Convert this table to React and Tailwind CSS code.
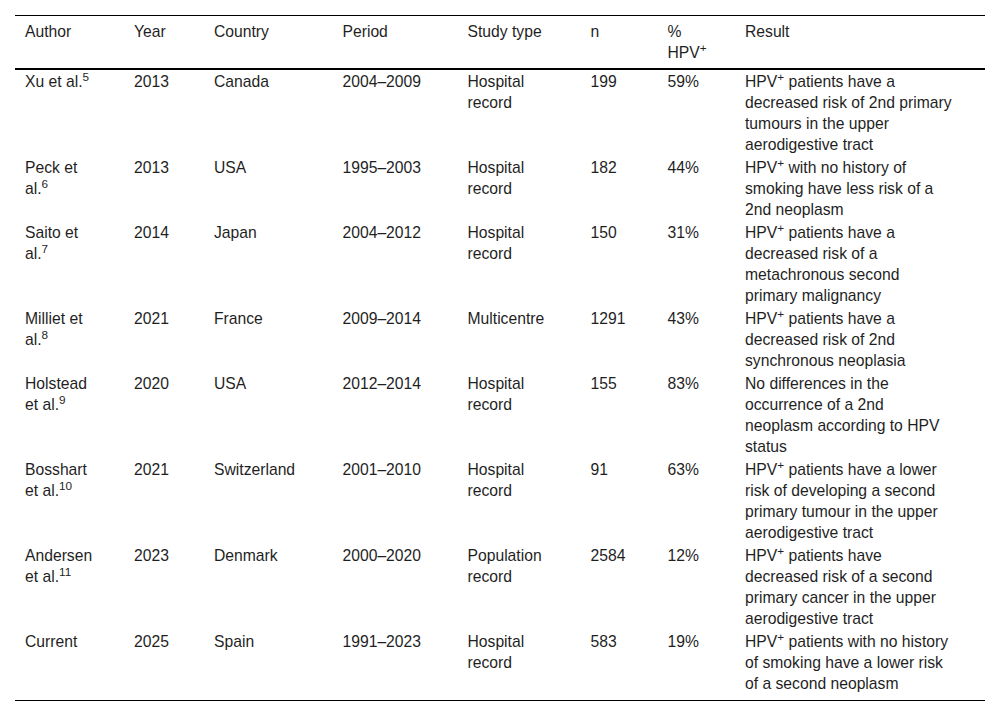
import React from 'react';

const cols = 'grid grid-cols-[109px_80px_128.5px_125px_123px_77px_77.5px_250px]';

// right padding per column keeps the wrap points of the source table
const pads = [
  'pl-[10px] pr-[25px]',
  'pl-[10px] pr-[20px]',
  'pl-[10px] pr-[20px]',
  'pl-[10px] pr-[20px]',
  'pl-[10px] pr-[23px]',
  'pl-[10px] pr-[15px]',
  'pl-[10px] pr-[17px]',
  'pl-[10px] pr-[31px]',
];

const Plus = () => <sup>+</sup>;

const rows = [
  [<>Xu et al.<sup>5</sup></>, '2013', 'Canada', '2004–2009', 'Hospital record', '199', '59%',
    <>HPV<Plus /> patients have a decreased risk of 2nd primary tumours in the upper aerodigestive tract</>],
  [<>Peck et al.<sup>6</sup></>, '2013', 'USA', '1995–2003', 'Hospital record', '182', '44%',
    <>HPV<Plus /> with no history of smoking have less risk of a 2nd neoplasm</>],
  [<>Saito et al.<sup>7</sup></>, '2014', 'Japan', '2004–2012', 'Hospital record', '150', '31%',
    <>HPV<Plus /> patients have a decreased risk of a metachronous second primary malignancy</>],
  [<>Milliet et al.<sup>8</sup></>, '2021', 'France', '2009–2014', 'Multicentre', '1291', '43%',
    <>HPV<Plus /> patients have a decreased risk of 2nd synchronous neoplasia</>],
  [<>Holstead et al.<sup>9</sup></>, '2020', 'USA', '2012–2014', 'Hospital record', '155', '83%',
    <>No differences in the occurrence of a 2nd neoplasm according to HPV status</>],
  [<>Bosshart et al.<sup>10</sup></>, '2021', 'Switzerland', '2001–2010', 'Hospital record', '91', '63%',
    <>HPV<Plus /> patients have a lower risk of developing a second primary tumour in the upper aerodigestive tract</>],
  [<>Andersen et al.<sup>11</sup></>, '2023', 'Denmark', '2000–2020', 'Population record', '2584', '12%',
    <>HPV<Plus /> patients have decreased risk of a second primary cancer in the upper aerodigestive tract</>],
  ['Current', '2025', 'Spain', '1991–2023', 'Hospital record', '583', '19%',
    <>HPV<Plus /> patients with no history of smoking have a lower risk of a second neoplasm</>],
];

const headers = ['Author', 'Year', 'Country', 'Period', 'Study type', 'n', <>% HPV<Plus /></>, 'Result'];

export default function App() {
  return (
    <div className="min-h-[716px] bg-white pt-[15px] px-[15px] font-['Liberation_Sans',Arial,sans-serif] text-[15.7px] leading-[21px] text-[#1f1f1f]">
      <div className="w-[970px] border-t border-b border-black">
        <div className={`${cols} border-b-2 border-black`}>
          {headers.map((h, i) => (
            <div key={i} className={`${pads[i]} pt-[5px] pb-[5px]`}>{h}</div>
          ))}
        </div>
        {rows.map((row, r) => (
          <div key={r} className={cols}>
            {row.map((cell, i) => (
              <div
                key={i}
                className={`${pads[i]} pt-[1px] ${r === rows.length - 1 ? 'pb-[6px]' : 'pb-[1px]'}`}
              >
                {cell}
              </div>
            ))}
          </div>
        ))}
      </div>
    </div>
  );
}
